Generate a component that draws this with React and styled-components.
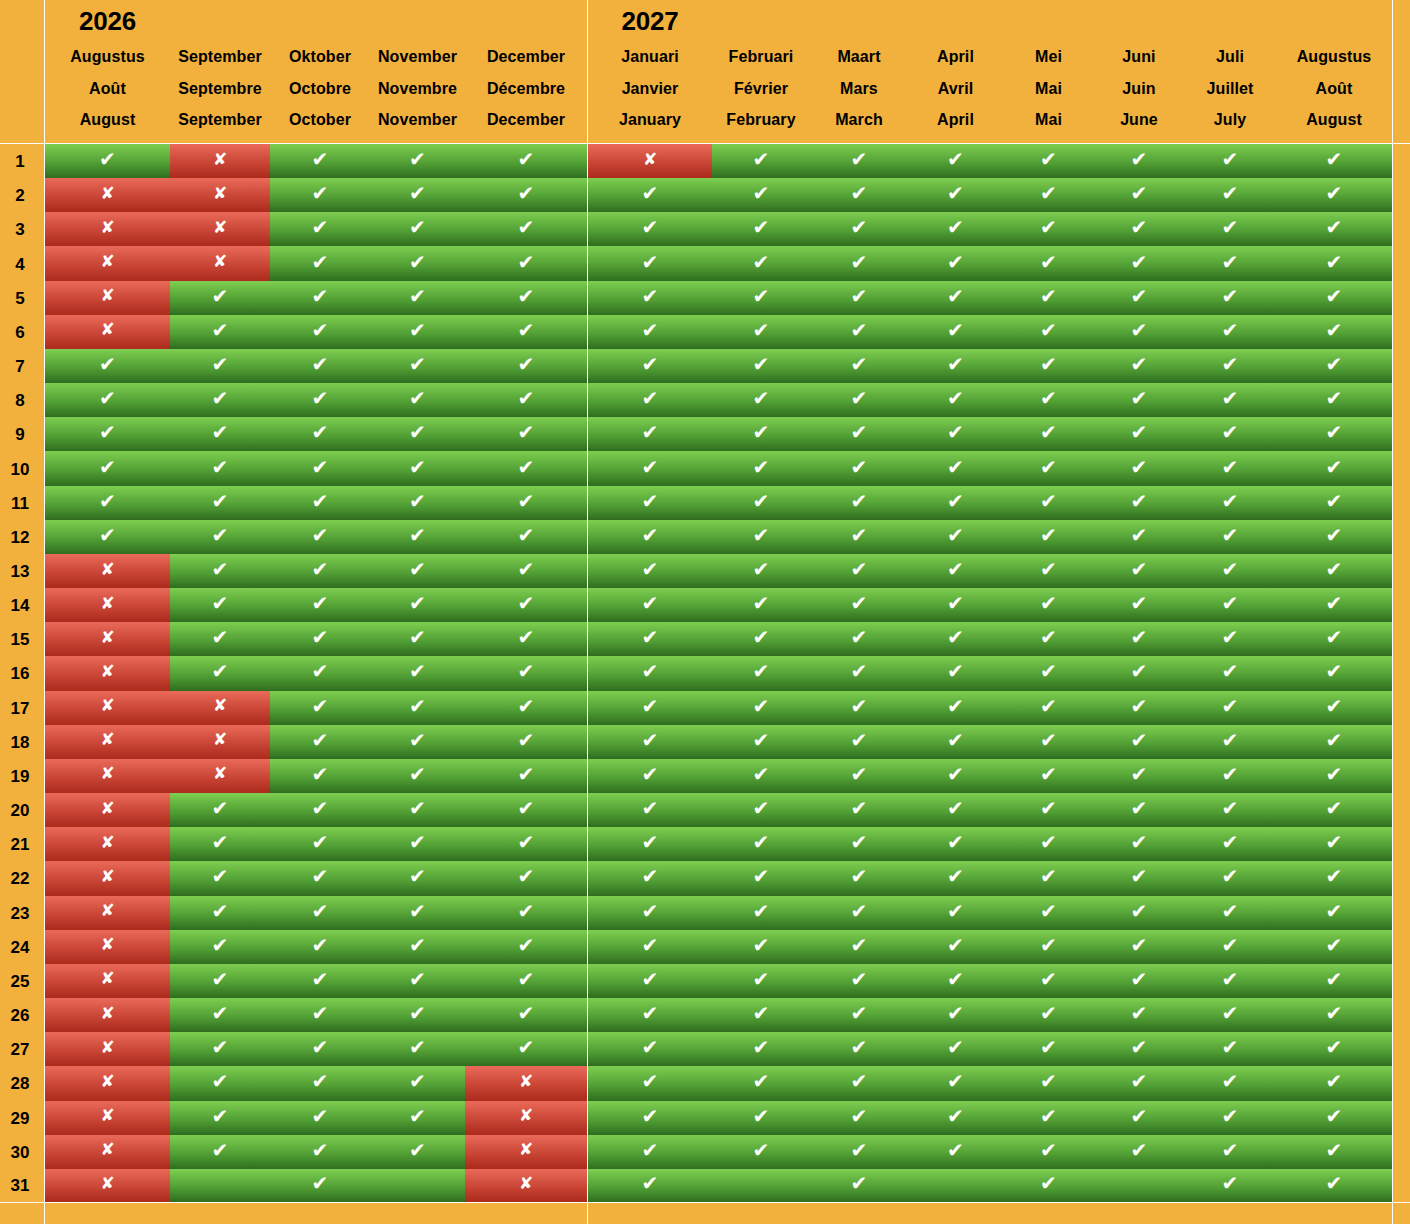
import React from 'react'
import styled, { createGlobalStyle } from 'styled-components'

const ORANGE = '#f2b03c'

const YEARS = [
    {
        year: '2026',
        months: [
            { names: ['Augustus', 'Août', 'August'], width: 125, days: 31, closed: [[2, 6], [13, 31]] },
            { names: ['September', 'Septembre', 'September'], width: 100, days: 30, closed: [[1, 4], [17, 19]] },
            { names: ['Oktober', 'Octobre', 'October'], width: 100, days: 31, closed: [] },
            { names: ['November', 'Novembre', 'November'], width: 95, days: 30, closed: [] },
            { names: ['December', 'Décembre', 'December'], width: 123, days: 31, closed: [[28, 31]], edge: true },
        ],
    },
    {
        year: '2027',
        months: [
            { names: ['Januari', 'Janvier', 'January'], width: 124, days: 31, closed: [[1, 1]] },
            { names: ['Februari', 'Février', 'February'], width: 98, days: 30, closed: [] },
            { names: ['Maart', 'Mars', 'March'], width: 98, days: 31, closed: [] },
            { names: ['April', 'Avril', 'April'], width: 95, days: 30, closed: [] },
            { names: ['Mei', 'Mai', 'Mai'], width: 91, days: 31, closed: [] },
            { names: ['Juni', 'Juin', 'June'], width: 90, days: 30, closed: [] },
            { names: ['Juli', 'Juillet', 'July'], width: 92, days: 31, closed: [] },
            { names: ['Augustus', 'Août', 'August'], width: 117, days: 31, closed: [], edge: true },
        ],
    },
]

const MONTHS = YEARS.flatMap(y =>
    y.months.map((m, i) => ({ ...m, year: i === 0 ? y.year : null }))
)

const DAYS = Array.from({ length: 31 }, (_, i) => i + 1)

const isClosed = (month, day) =>
    month.closed.some(([from, to]) => day >= from && day <= to)

export default function App() {
    const columns = ['45px', ...MONTHS.map(m => `${m.width}px`), '1fr'].join(' ')

    return (
        <>
            <GlobalStyle />
            <Sheet $columns={columns}>
                <Corner />
                {MONTHS.map((m, i) => (
                    <HeaderCell key={`h${i}`} $edge={m.edge}>
                        <Year>{m.year}</Year>
                        {m.names.map(name => (
                            <MonthName key={name}>{name}</MonthName>
                        ))}
                    </HeaderCell>
                ))}
                <HeaderFiller />

                {DAYS.map(day => (
                    <React.Fragment key={day}>
                        <DayLabel $last={day === 31}>{day}</DayLabel>
                        {MONTHS.map((m, i) => {
                            const closed = isClosed(m, day)
                            const exists = day <= m.days
                            return (
                                <Slot key={i} $closed={closed} $edge={m.edge} $last={day === 31}>
                                    {exists && <Mark $closed={closed}>{closed ? '✘' : '✔'}</Mark>}
                                </Slot>
                            )
                        })}
                        <Filler $last={day === 31} />
                    </React.Fragment>
                ))}

                <FooterCell $edge />
                {MONTHS.map((m, i) => (
                    <FooterCell key={`f${i}`} $edge={m.edge} />
                ))}
                <FooterCell />
            </Sheet>
        </>
    )
}

const GlobalStyle = createGlobalStyle`
  html, body {
    margin: 0;
    padding: 0;
    background: ${ORANGE};
  }

  body {
    font-family: 'Liberation Sans', Arial, sans-serif;
    color: #000;
  }
`

const Sheet = styled.div`
  display: grid;
  grid-template-columns: ${p => p.$columns};
  grid-template-rows: 144px repeat(31, 1fr) 21px;
  width: 1410px;
  height: 1224px;
  background: ${ORANGE};

  & > * {
    box-sizing: border-box;
  }
`

const Corner = styled.div`
  border-right: 1px solid #fff;
  border-bottom: 1px solid #fff;
`

const HeaderCell = styled.div`
  display: flex;
  flex-direction: column;
  align-items: center;
  border-bottom: 1px solid #fff;
  border-right: ${p => (p.$edge ? '1px solid #fff' : 'none')};
  font-weight: bold;
  white-space: nowrap;
`

const HeaderFiller = styled.div`
  border-bottom: 1px solid #fff;
`

const Year = styled.div`
  height: 41px;
  line-height: 42px;
  font-size: 26px;
  letter-spacing: -0.2px;
`

const MonthName = styled.div`
  height: 31.5px;
  line-height: 31.5px;
  font-size: 16px;
  letter-spacing: 0.1px;
`

const DayLabel = styled.div`
  display: flex;
  align-items: center;
  justify-content: center;
  border-right: 1px solid #fff;
  border-bottom: ${p => (p.$last ? '1px solid #fff' : 'none')};
  font-size: 17px;
  font-weight: bold;
  padding: 2px 4px 0 0;
`

const Slot = styled.div`
  display: flex;
  align-items: center;
  justify-content: center;
  background: ${p =>
        p.$closed
            ? 'linear-gradient(to bottom, #ea6a59 0%, #c94536 55%, #aa2a1b 100%)'
            : 'linear-gradient(to bottom, #7dce50 0%, #52a035 55%, #2f6d1f 100%)'};
  border-right: ${p => (p.$edge ? '1px solid #fff' : 'none')};
  border-bottom: ${p => (p.$last ? '1px solid #fff' : 'none')};
  padding-bottom: 4px;
`

const Mark = styled.span`
  color: #fff;
  font-family: 'DejaVu Sans', sans-serif;
  font-size: ${p => (p.$closed ? '17px' : '20px')};
  line-height: 1;
`

const Filler = styled.div`
  border-bottom: ${p => (p.$last ? '1px solid #fff' : 'none')};
`

const FooterCell = styled.div`
  border-right: ${p => (p.$edge ? '1px solid #fff' : 'none')};
`
